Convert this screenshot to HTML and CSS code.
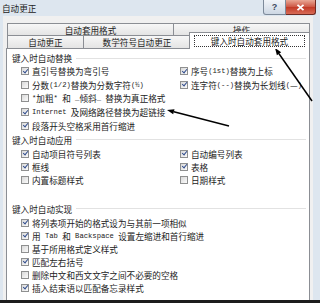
FILE: index.html
```html
<!DOCTYPE html>
<html lang="zh-CN">
<head>
    <meta charset="UTF-8">
    <title>自动更正</title>
    <link rel="stylesheet" href="styles.css">
</head>
<body>
    <div class="window">
        <div class="titlebar">
            <span class="title">自动更正</span>
            <div class="caps">
                <span class="btn help">?</span>
                <span class="btn close">
                    <svg width="9" height="7" viewBox="0 0 9 7"><path d="M1.5 0.8 L7.5 6.2 M7.5 0.8 L1.5 6.2" stroke="#fff" stroke-width="1.8"/></svg>
                </span>
            </div>
        </div>

        <div class="body">
            <!-- tabs, two rows -->
            <div class="tabrow row1">
                <span class="tab t-a">自动套用格式</span>
                <span class="tab t-b">操作</span>
            </div>
            <div class="tabrow row2">
                <span class="tab t-c">自动更正</span>
                <span class="tab t-d">数学符号自动更正</span>
                <span class="tab active"><span class="focus">键入时自动套用格式</span></span>
            </div>

            <div class="panel">
                <div class="group g1">
                    <div class="head">键入时自动替换</div>
                    <div class="rows">
                        <div class="line">
                            <div class="item"><span class="cb on"></span>直引号替换为弯引号</div>
                            <div class="item"><span class="cb on"></span>序号<span class="en">(1st)</span>替换为上标</div>
                        </div>
                        <div class="line">
                            <div class="item"><span class="cb"></span>分数<span class="en">(1/2)</span>替换为分数字符<span class="en">(½)</span></div>
                            <div class="item"><span class="cb on"></span>连字符<span class="en">(--)</span>替换为长划线<span class="en">(</span>—<span class="en">)</span></div>
                        </div>
                        <div class="line">
                            <div class="item"><span class="cb"></span><span class="en">*</span>加粗<span class="en">* </span>和<span class="en"> _</span>倾斜<span class="en">_ </span>替换为真正格式</div>
                        </div>
                        <div class="line">
                            <div class="item"><span class="cb on"></span><span class="en">Internet </span>及网络路径替换为超链接</div>
                        </div>
                        <div class="line">
                            <div class="item"><span class="cb on"></span>段落开头空格采用首行缩进</div>
                        </div>
                    </div>
                </div>

                <div class="group g2">
                    <div class="head">键入时自动应用</div>
                    <div class="rows">
                        <div class="line">
                            <div class="item"><span class="cb on"></span>自动项目符号列表</div>
                            <div class="item"><span class="cb on"></span>自动编号列表</div>
                        </div>
                        <div class="line">
                            <div class="item"><span class="cb on"></span>框线</div>
                            <div class="item"><span class="cb on"></span>表格</div>
                        </div>
                        <div class="line">
                            <div class="item"><span class="cb"></span>内置标题样式</div>
                            <div class="item"><span class="cb"></span>日期样式</div>
                        </div>
                    </div>
                </div>

                <div class="group g3">
                    <div class="head">键入时自动实现</div>
                    <div class="rows">
                        <div class="line"><div class="item"><span class="cb on"></span>将列表项开始的格式设为与其前一项相似</div></div>
                        <div class="line"><div class="item"><span class="cb on"></span>用<span class="en"> Tab </span>和<span class="en"> Backspace </span>设置左缩进和首行缩进</div></div>
                        <div class="line"><div class="item"><span class="cb"></span>基于所用格式定义样式</div></div>
                        <div class="line"><div class="item"><span class="cb on"></span>匹配左右括号</div></div>
                        <div class="line"><div class="item"><span class="cb"></span>删除中文和西文文字之间不必要的空格</div></div>
                        <div class="line"><div class="item"><span class="cb on"></span>插入结束语以匹配备忘录样式</div></div>
                    </div>
                </div>
            </div>
        </div>

        <!-- annotation arrows drawn over the dialog -->
        <svg class="arrows" width="320" height="303" viewBox="0 0 320 303">
            <line x1="312" y1="101" x2="279" y2="53.7" stroke="#000" stroke-width="1.5"/>
            <polygon points="275,48 281.2,52.3 276.9,55.3" fill="#000"/>
            <line x1="229" y1="126" x2="173.8" y2="111.8" stroke="#000" stroke-width="1.5"/>
            <polygon points="167,110 174.5,109.2 173.2,114.3" fill="#000"/>
        </svg>
    </div>
</body>
</html>
```

FILE: styles.css
```css
* {
    box-sizing: border-box;
}
body {
    margin: 0;
    font-family: "Noto Sans CJK SC", sans-serif;
    font-size: 8.6px;
    color: #222;
}

.window {
    width: 320px;
    height: 303px;
    background: #dde6ef;
    border-bottom: 3px solid #1c1c1c;
    position: relative;
    overflow: hidden;
}

/* title bar */
.titlebar {
    height: 16px;
    display: flex;
    justify-content: space-between;
    align-items: flex-start;
}
.title {
    padding: 2px 0 0 2px;
    line-height: 12px;
}
.caps {
    display: flex;
    margin-right: 4px;
}
.btn {
    height: 15px;
    display: flex;
    align-items: center;
    justify-content: center;
}
.help {
    width: 23px;
    border: 1px solid #7d8a9a;
    border-top: none;
    border-radius: 0 0 0 3px;
    background: linear-gradient(#f1f4f8, #cdd7e3);
    color: #3d4b60;
    font-family: "Liberation Sans", sans-serif;
    font-weight: bold;
    font-size: 9px;
}
.close {
    width: 30px;
    border: 1px solid #6e2a22;
    border-top: none;
    border-left: none;
    border-radius: 0 0 3px 0;
    background: linear-gradient(#e9a795, #cd5643 50%, #c23a27 52%, #d86c57);
}

/* dialog body */
.body {
    margin: 0 7px 0 3px;
    background: #f0f0f0;
    padding: 7px 3px 0 3px;
    height: 300px;
}

.tabrow {
    display: flex;
    margin-left: 1px;
}
.row1 {
    height: 12px;
}
.row2 {
    height: 13px;
    align-items: flex-end;
}
.tab {
    height: 100%;
    border: 1px solid #8b8e94;
    border-bottom: none;
    background: linear-gradient(#f7f7f7, #e4e4e4);
    display: flex;
    align-items: center;
    justify-content: center;
    white-space: nowrap;
}
.t-a { width: 167px; }
.t-b { width: 137px; margin-left: -1px; }
.t-c { width: 77px; }
.t-d { width: 108px; margin-left: -1px; }
.tab.active {
    width: 121px;
    height: 17px;
    margin-left: -2px;
    margin-bottom: -1px;
    background: #fff;
    align-items: flex-start;
    padding-top: 2px;
    position: relative;
    z-index: 1;
}
.focus {
    width: 111px;
    height: 12px;
    border: 1px dotted #333;
    display: flex;
    align-items: center;
    justify-content: center;
}

/* white page under the tabs */
.panel {
    background: #fff;
    border: 1px solid #8b8e94;
    height: 300px;
    padding: 3px 0 0 5px;
}

.head {
    height: 12.5px;
    display: flex;
    align-items: center;
    white-space: nowrap;
}
.head::after {
    content: "";
    flex: 1;
    height: 1px;
    background: #e2e2e2;
    margin: 0 3px 0 4px;
}

.line {
    display: flex;
    height: 13.6px;
    padding-left: 9px;
}
.g2 .line, .g3 .line {
    height: 13px;
}
.g2 .head { margin-top: 1px; }
.g2 .rows { margin-top: 1.5px; }
.g3 .head { margin-top: 16.25px; }
.g3 .rows { margin-top: 1.25px; }

.item {
    width: 159px;
    flex: none;
    display: flex;
    align-items: center;
    white-space: nowrap;
}
.en {
    font-family: "Liberation Mono", monospace;
    font-size: 7.2px;
    white-space: pre;
}

.cb {
    width: 8px;
    height: 8px;
    flex: none;
    margin-right: 3px;
    border: 1px solid #8f9090;
    background: linear-gradient(135deg, #d9d9d9, #fbfbfb);
    position: relative;
}
.cb.on::after {
    content: "";
    position: absolute;
    left: 1.6px;
    top: -0.5px;
    width: 2px;
    height: 4.2px;
    border: solid #2e4b8c;
    border-width: 0 1.5px 1.5px 0;
    transform: rotate(40deg);
}

.arrows {
    position: absolute;
    left: 0;
    top: 0;
    pointer-events: none;
}
```
